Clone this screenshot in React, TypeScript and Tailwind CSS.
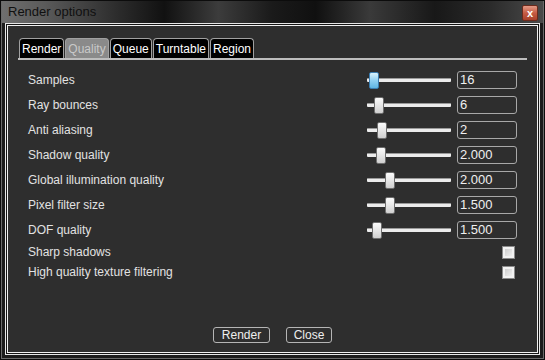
import { useState } from "react";

const sliders = [
  { label: "Samples", value: "16", thumb: 2, active: true },
  { label: "Ray bounces", value: "6", thumb: 7 },
  { label: "Anti aliasing", value: "2", thumb: 10 },
  { label: "Shadow quality", value: "2.000", thumb: 9 },
  { label: "Global illumination quality", value: "2.000", thumb: 18 },
  { label: "Pixel filter size", value: "1.500", thumb: 18 },
  { label: "DOF quality", value: "1.500", thumb: 5 },
];

const checks = ["Sharp shadows", "High quality texture filtering"];
const tabs = ["Render", "Quality", "Queue", "Turntable", "Region"];

function Slider({ left, active }: { left: number; active?: boolean }) {
  return (
    <div className="relative h-[18px] w-[84px]">
      <div className="absolute left-0 right-0 top-[7px] h-[4px] rounded-[1px] border-t border-[#9a9a9a] bg-[#ececec]" />
      <div
        className={`absolute top-[1px] h-[17px] w-[10px] rounded-[2px] border ${
          active
            ? "border-[#3b7db0] bg-[linear-gradient(180deg,#d9f2fd,#8fd0f2_50%,#5fb5e3)]"
            : "border-[#6e6e6e] bg-[linear-gradient(180deg,#fbfbfb,#e6e6e6_50%,#cfcfcf)]"
        }`}
        style={{ left }}
      />
    </div>
  );
}

export default function App() {
  const [tab, setTab] = useState("Quality");

  return (
    <div
      className="flex h-[360px] w-[545px] flex-col border border-[#0c0c0c] bg-[#1b1b1b] text-[12px]"
      style={{ fontFamily: '"Liberation Sans", Arial, sans-serif' }}
    >
      <div className="flex flex-1 flex-col border border-[#6a6a6a] border-t-0">
        {/* title bar */}
        <div className="flex h-[22px] items-center justify-between bg-[linear-gradient(90deg,#6f6f6f_0%,#5a5a5a_8%,#2a2a2a_22%,#111_30%,#3c3c3c_40%,#1a1a1a_50%,#101010_58%,#3a3a3a_68%,#181818_80%,#2a2a2a_90%,#4a4a4a_100%)] pl-[6px] pr-[5px]">
          <span className="text-[13px] text-[#101010]">Render options</span>
          <div className="mt-[2px] flex h-[16px] w-[16px] items-center justify-center rounded-[2px] border border-[#6b2a1c] bg-[linear-gradient(180deg,#e49a86,#c65c44_50%,#a8402a)] text-[11px] font-bold leading-none text-white">
            x
          </div>
        </div>

        {/* frame */}
        <div className="flex flex-1 flex-col px-[3px] pb-[3px]">
          <div className="flex flex-1 flex-col border border-[#e6e6e6] bg-[#141414] p-[1px]">
            <div className="flex flex-1 flex-col border border-[#f0f0f0] bg-[#2e2e2e] pl-[10px] pr-[10px] pt-[12px]">
              <div className="flex flex-col">
                <div className="flex gap-[1px] pl-[1px]">
                  {tabs.map((t) => (
                    <button
                      key={t}
                      onClick={() => setTab(t)}
                      className={`flex h-[20px] items-center rounded-t-[4px] border border-b-0 border-[#a0a0a0] px-[2px] text-[12px] ${
                        tab === t ? "bg-[#8a8a8a] text-[#c9c9c9]" : "bg-black text-white"
                      }`}
                    >
                      {t}
                    </button>
                  ))}
                </div>
                <div className="h-[2px] bg-[#bdbdbd]" />
              </div>

              <div className="flex flex-col pl-[10px] pr-[10px] pt-[7px]">
                {sliders.map((s) => (
                  <div key={s.label} className="flex h-[25px] items-center">
                    <span className="flex-1 text-[#e2e2e2]">{s.label}</span>
                    <Slider left={s.thumb} active={s.active} />
                    <div className="ml-[6px] flex h-[18px] w-[60px] items-center rounded-[3px] border border-[#a8a8a8] pl-[2px] text-[13px] text-[#f0f0f0]">
                      {s.value}
                    </div>
                  </div>
                ))}
                {checks.map((c) => (
                  <div key={c} className="flex h-[20px] items-center">
                    <span className="flex-1 text-[#e2e2e2]">{c}</span>
                    <div className="mr-[2px] h-[13px] w-[13px] border border-[#8a8a8a] bg-[#f2f2f2] p-[2px]">
                      <div className="h-full w-full bg-[linear-gradient(135deg,#cfcfcf,#efefef)]" />
                    </div>
                  </div>
                ))}
              </div>

              <div className="flex-1" />
              <div className="flex justify-center gap-[16px] pb-[9px]">
                <button className="h-[16px] w-[57px] rounded-[3px] border border-[#b5b5b5] text-[12px] leading-none text-[#eeeeee]">
                  Render
                </button>
                <button className="h-[16px] w-[46px] rounded-[3px] border border-[#b5b5b5] text-[12px] leading-none text-[#eeeeee]">
                  Close
                </button>
              </div>
            </div>
          </div>
        </div>
      </div>
    </div>
  );
}
